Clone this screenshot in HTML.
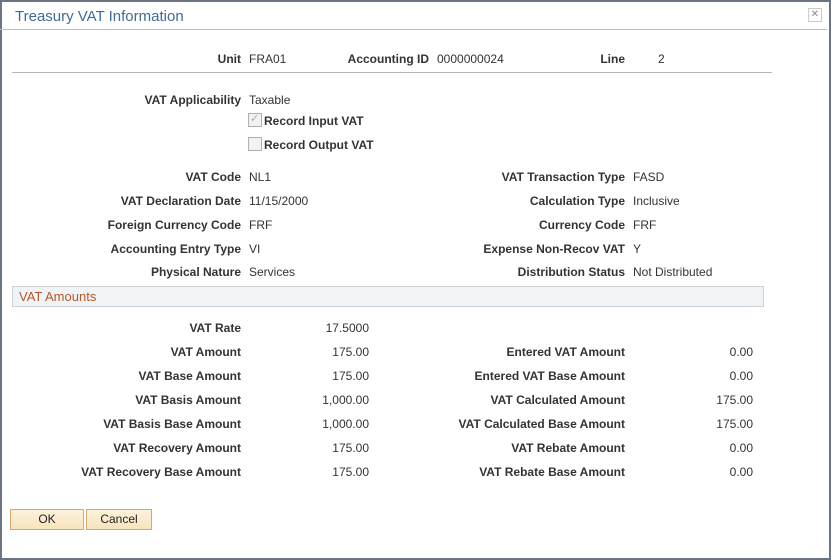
<!DOCTYPE html>
<html><head><style>
body{margin:0;width:831px;height:560px;overflow:hidden;background:#fff;font-family:"Liberation Sans",Arial,sans-serif;}
.frame{position:absolute;left:0;top:0;width:827px;height:556px;border:2px solid #6b7580;background:#fff;}
.t{position:absolute;font-size:12px;color:#333;white-space:nowrap;line-height:14px;}
.l{font-weight:bold;text-align:right;}
.title{position:absolute;left:15px;top:8px;font-size:15px;color:#3f6b96;}
.sep{position:absolute;left:0;top:29px;width:827px;height:1px;background:#b8c2cc;}
.hr{position:absolute;left:12px;top:72px;width:760px;height:1px;background:#b5b5b5;}
.close{position:absolute;left:808px;top:8px;width:12px;height:12px;border:1px solid #ccc;font-size:10px;color:#888;text-align:center;line-height:12px;}
.cb{position:absolute;width:12px;height:12px;border:1px solid #b0b0b0;background:#f2f2f2;}
.sec{position:absolute;left:12px;top:286px;width:750px;height:19px;background:#f1f4f6;border:1px solid #ccd2d8;}
.sec span{position:absolute;left:6px;top:2px;font-size:13px;color:#b8562a;}
.btn{position:absolute;top:509px;height:19px;border:1px solid #d9a66e;background:linear-gradient(#fdf2dd,#f7e4bd);font-size:12px;color:#222;text-align:center;line-height:19px;}
</style></head><body>
<div class="frame"></div>
<div class="title">Treasury VAT Information</div>
<div class="close">✕</div>
<div class="sep"></div>

<div class="t l" style="right:590px;top:52px">Unit</div>
<div class="t" style="left:249px;top:52px">FRA01</div>
<div class="t l" style="right:402px;top:52px">Accounting ID</div>
<div class="t" style="left:437px;top:52px">0000000024</div>
<div class="t l" style="right:206px;top:52px">Line</div>
<div class="t" style="left:658px;top:52px">2</div>
<div class="hr"></div>

<div class="t l" style="right:590px;top:93px">VAT Applicability</div>
<div class="t" style="left:249px;top:93px">Taxable</div>
<div class="cb" style="left:248px;top:113px"><span style="position:absolute;left:1px;top:-2px;font-size:11px;color:#aaa">✓</span></div>
<div class="t l" style="left:264px;top:114px">Record Input VAT</div>
<div class="cb" style="left:248px;top:137px"></div>
<div class="t l" style="left:264px;top:138px">Record Output VAT</div>

<div class="t l" style="right:590px;top:170px">VAT Code</div><div class="t" style="left:249px;top:170px">NL1</div>
<div class="t l" style="right:590px;top:194px">VAT Declaration Date</div><div class="t" style="left:249px;top:194px">11/15/2000</div>
<div class="t l" style="right:590px;top:218px">Foreign Currency Code</div><div class="t" style="left:249px;top:218px">FRF</div>
<div class="t l" style="right:590px;top:242px">Accounting Entry Type</div><div class="t" style="left:249px;top:242px">VI</div>
<div class="t l" style="right:590px;top:265px">Physical Nature</div><div class="t" style="left:249px;top:265px">Services</div>

<div class="t l" style="right:206px;top:170px">VAT Transaction Type</div><div class="t" style="left:633px;top:170px">FASD</div>
<div class="t l" style="right:206px;top:194px">Calculation Type</div><div class="t" style="left:633px;top:194px">Inclusive</div>
<div class="t l" style="right:206px;top:218px">Currency Code</div><div class="t" style="left:633px;top:218px">FRF</div>
<div class="t l" style="right:206px;top:242px">Expense Non-Recov VAT</div><div class="t" style="left:633px;top:242px">Y</div>
<div class="t l" style="right:206px;top:265px">Distribution Status</div><div class="t" style="left:633px;top:265px">Not Distributed</div>

<div class="sec"><span>VAT Amounts</span></div>

<div class="t l" style="right:590px;top:321px">VAT Rate</div><div class="t" style="right:462px;top:321px">17.5000</div>
<div class="t l" style="right:590px;top:345px">VAT Amount</div><div class="t" style="right:462px;top:345px">175.00</div>
<div class="t l" style="right:590px;top:369px">VAT Base Amount</div><div class="t" style="right:462px;top:369px">175.00</div>
<div class="t l" style="right:590px;top:393px">VAT Basis Amount</div><div class="t" style="right:462px;top:393px">1,000.00</div>
<div class="t l" style="right:590px;top:417px">VAT Basis Base Amount</div><div class="t" style="right:462px;top:417px">1,000.00</div>
<div class="t l" style="right:590px;top:441px">VAT Recovery Amount</div><div class="t" style="right:462px;top:441px">175.00</div>
<div class="t l" style="right:590px;top:465px">VAT Recovery Base Amount</div><div class="t" style="right:462px;top:465px">175.00</div>

<div class="t l" style="right:206px;top:345px">Entered VAT Amount</div><div class="t" style="right:78px;top:345px">0.00</div>
<div class="t l" style="right:206px;top:369px">Entered VAT Base Amount</div><div class="t" style="right:78px;top:369px">0.00</div>
<div class="t l" style="right:206px;top:393px">VAT Calculated Amount</div><div class="t" style="right:78px;top:393px">175.00</div>
<div class="t l" style="right:206px;top:417px">VAT Calculated Base Amount</div><div class="t" style="right:78px;top:417px">175.00</div>
<div class="t l" style="right:206px;top:441px">VAT Rebate Amount</div><div class="t" style="right:78px;top:441px">0.00</div>
<div class="t l" style="right:206px;top:465px">VAT Rebate Base Amount</div><div class="t" style="right:78px;top:465px">0.00</div>

<div class="btn" style="left:10px;width:72px">OK</div>
<div class="btn" style="left:86px;width:64px">Cancel</div>
</body></html>
